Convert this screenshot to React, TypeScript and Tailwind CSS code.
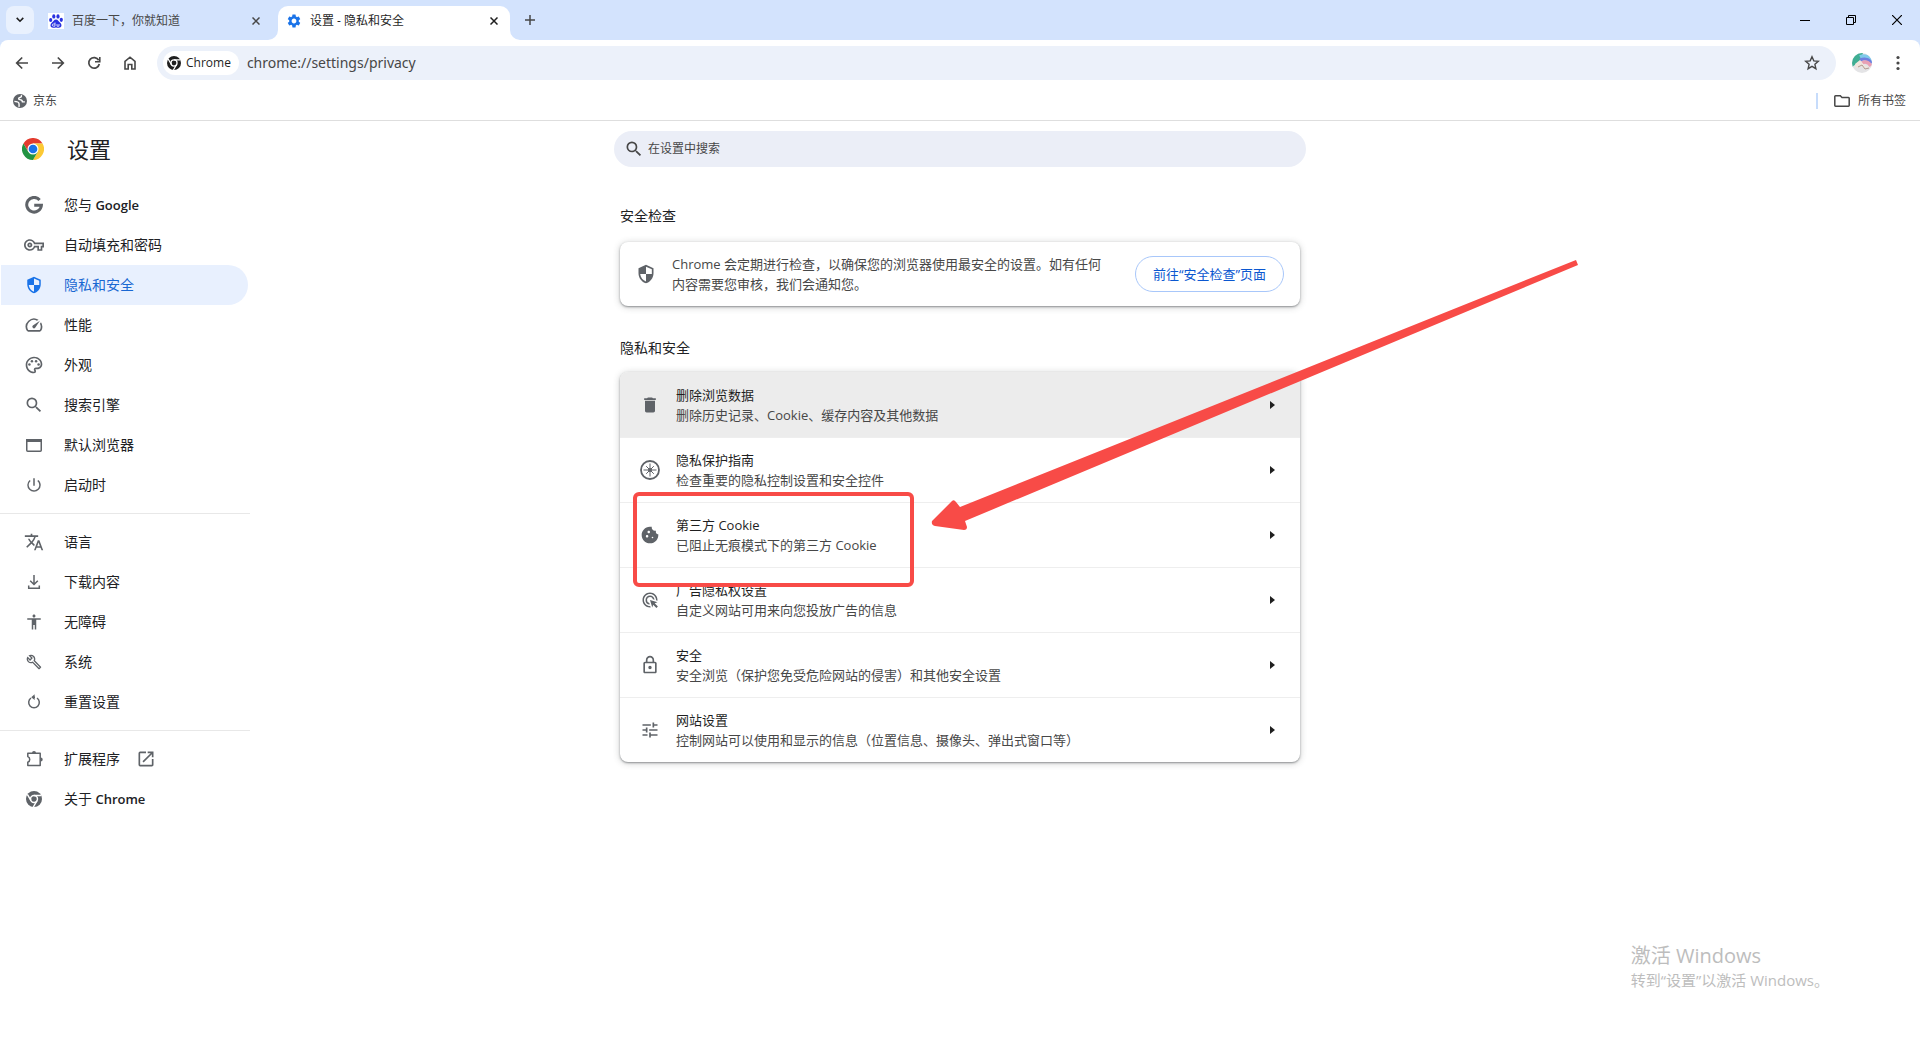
import type { ReactNode } from "react";
import {
  MdAccessibility,
  MdCookie,
  MdDelete,
  MdOpenInNew,
  MdOutlineAdsClick,
  MdOutlineBuild,
  MdOutlineLock,
  MdOutlinePalette,
  MdOutlineSpeed,
  MdOutlineVpnKey,
  MdPowerSettingsNew,
  MdSearch,
  MdSettings,
  MdTranslate,
  MdTune,
} from "react-icons/md";

const line = { fill: "none", stroke: "currentColor", strokeWidth: 2 };

function Shield({ className }: { className?: string }) {
  return (
    <svg viewBox="0 0 24 24" className={className} fill="currentColor">
      <path d="M12 1l9 4v6c0 5.55-3.84 10.74-9 12-5.16-1.26-9-6.45-9-12V5l9-4zm0 11H5c.53 4.12 3.28 7.79 7 8.94V12h7V6.3l-7-3.11V12z" />
    </svg>
  );
}

function ChromeMono({ className }: { className?: string }) {
  return (
    <svg viewBox="0 0 24 24" className={className}>
      <circle cx="12" cy="12" r="12" fill="currentColor" />
      <circle cx="12" cy="12" r="5.2" fill="none" stroke="white" strokeWidth="2.2" />
      <path d="M12 6.8h11M7.5 14.6L2 5.1M16.5 14.6L11 24" stroke="white" strokeWidth="2.2" />
    </svg>
  );
}

function ChromeLogo() {
  return (
    <svg viewBox="0 0 48 48" className="size-[22px]">
      <path d="M24 12h20.8A24 24 0 0 0 3.2 12l10.4 18z" fill="#e33b2e" />
      <path d="M34.4 30L24 48A24 24 0 0 0 44.8 12H24z" fill="#fcc934" />
      <path d="M13.6 30L3.2 12A24 24 0 0 0 24 48l10.4-18z" fill="#229342" />
      <circle cx="24" cy="24" r="12" fill="white" />
      <circle cx="24" cy="24" r="9.5" fill="#1a73e8" />
    </svg>
  );
}

function Google() {
  return (
    <svg viewBox="0 0 24 24" className="size-[18px]">
      <path d="M19.5 5.2A9.8 9.8 0 1 0 21.9 12.3H12.3" {...line} strokeWidth="4" />
    </svg>
  );
}

function Browser() {
  return (
    <svg viewBox="0 0 20 20" className="size-5">
      <rect x="2.75" y="4.75" width="14.5" height="11.5" rx="1" {...line} strokeWidth="1.5" />
      <path d="M2 4h16v3H2z" fill="currentColor" />
    </svg>
  );
}

function Download() {
  return (
    <svg viewBox="0 0 20 20" className="size-5">
      <path d="M10 3v9M6.2 8.7l3.8 3.8 3.8-3.8M4.7 13.5v2.7h10.6v-2.7" {...line} strokeWidth="1.5" />
    </svg>
  );
}

function Reset() {
  return (
    <svg viewBox="0 0 20 20" className="size-5">
      <path d="M7 6a5.300 5.300 0 1 0 6 0M9.500 5.200H11" {...line} strokeWidth="1.5" />
      <path d="M7.2 5.2l3.4-2.900v5.800z" fill="currentColor" />
    </svg>
  );
}

function Puzzle() {
  return (
    <svg viewBox="0 0 20 20" className="size-5">
      <path
        d="M3.800 4.300h12.400v12.200H3.800v-3.300a3 3 0 0 0 0-5.600z"
        strokeLinejoin="round"
        {...line}
        strokeWidth="1.5"
      />
      <path d="M8 4a2 2 0 0 1 4 0zM16.700 8.400a2 2 0 0 1 0 4z" fill="currentColor" />
    </svg>
  );
}

function Compass() {
  return (
    <svg viewBox="0 0 20 20" className="size-5">
      <circle cx="10" cy="10" r="9" {...line} strokeWidth="1.8" />
      <path d="M10 3.5v13M3.5 10h13M6.2 6.2l7.6 7.6M13.8 6.2l-7.6 7.6" {...line} strokeWidth="1" />
      <circle cx="10" cy="10" r="2" fill="currentColor" />
    </svg>
  );
}

function Globe() {
  return (
    <svg viewBox="0 0 20 20" className="size-[14px] text-[#5f6368]">
      <circle cx="10" cy="10" r="10" fill="currentColor" />
      <path
        d="M12 1.5c.5 2.500-1 3.500-3 3.800-1.500.4-1 2.700.5 2.700 2.500 0 4 1 4 3.300H17M2 10.500c3 0 6 .5 6.500 3 .2 1.500.5 2.500 0 5"
        fill="none"
        stroke="white"
        strokeWidth="2"
      />
    </svg>
  );
}

function Baidu() {
  return (
    <svg viewBox="0 0 16 16" className="size-4 bg-white" fill="#2932e1">
      <ellipse cx="2.7" cy="7" rx="1.6" ry="2.1" />
      <ellipse cx="5.8" cy="3.4" rx="1.6" ry="2.2" />
      <ellipse cx="10" cy="3.4" rx="1.6" ry="2.2" />
      <ellipse cx="13.3" cy="6.8" rx="1.6" ry="2.1" />
      <path d="M8 6.5c2 0 2.7 2 4.2 3.2 2.3 2 1.3 5-1.2 5-1.2 0-2-.3-3-.3s-1.8.3-3 .3c-2.5 0-3.5-3-1.2-5C5.3 8.5 6 6.5 8 6.5z" />
      <path d="M7 9.5v3.7H5.4a1 1 0 0 1 0-2.2H7M9 11v2.2h2V11" fill="none" stroke="white" strokeWidth=".8" />
    </svg>
  );
}

function Close() {
  return (
    <svg viewBox="0 0 8 8" className="size-2">
      <path d="M.5.5l7 7M7.5.5l-7 7" {...line} strokeWidth="1.5" />
    </svg>
  );
}

type Item = { label: string; latin?: string; icon: ReactNode; external?: boolean };

const groups: Item[][] = [
  [
    { label: "您与", latin: "Google", icon: <Google /> },
    { label: "自动填充和密码", icon: <MdOutlineVpnKey className="size-5" /> },
    { label: "隐私和安全", icon: <Shield className="size-[18px]" /> },
    { label: "性能", icon: <MdOutlineSpeed className="size-5" /> },
    { label: "外观", icon: <MdOutlinePalette className="size-5" /> },
    { label: "搜索引擎", icon: <MdSearch className="size-5" /> },
    { label: "默认浏览器", icon: <Browser /> },
    { label: "启动时", icon: <MdPowerSettingsNew className="size-[18px]" /> },
  ],
  [
    { label: "语言", icon: <MdTranslate className="size-5" /> },
    { label: "下载内容", icon: <Download /> },
    { label: "无障碍", icon: <MdAccessibility className="size-[18px]" /> },
    { label: "系统", icon: <MdOutlineBuild className="size-4" /> },
    { label: "重置设置", icon: <Reset /> },
  ],
  [
    { label: "扩展程序", icon: <Puzzle />, external: true },
    { label: "关于", latin: "Chrome", icon: <ChromeMono className="size-4" /> },
  ],
];

const rows = [
  { title: "删除浏览数据", text: "删除历史记录、Cookie、缓存内容及其他数据", icon: <MdDelete className="size-5" /> },
  { title: "隐私保护指南", text: "检查重要的隐私控制设置和安全控件", icon: <Compass /> },
  { title: "第三方 Cookie", text: "已阻止无痕模式下的第三方 Cookie", icon: <MdCookie className="size-5" /> },
  { title: "广告隐私权设置", text: "自定义网站可用来向您投放广告的信息", icon: <MdOutlineAdsClick className="size-[18px]" /> },
  { title: "安全", text: "安全浏览（保护您免受危险网站的侵害）和其他安全设置", icon: <MdOutlineLock className="size-5" /> },
  { title: "网站设置", text: "控制网站可以使用和显示的信息（位置信息、摄像头、弹出式窗口等）", icon: <MdTune className="size-5" /> },
];

function TabStrip() {
  return (
    <header className="flex h-10 items-end bg-[#d3e3fd] pl-1.5 text-xs text-[#1f1f1f]">
      <button aria-label="搜索标签页" className="mb-1.5 grid size-7 place-items-center rounded-lg bg-[#e9f1fe]">
        <svg viewBox="0 0 8 6" className="h-1.5 w-2">
          <path d="M.7.9L4 4.2 7.3.9" {...line} strokeWidth="1.6" />
        </svg>
      </button>
      <div className="flex h-[34px] w-[244px] items-center pb-1 pl-[14px] pr-[18px]">
        <Baidu />
        <span className="ml-2 flex-1 leading-4 text-[#474747]">百度一下，你就知道</span>
        <button aria-label="关闭" className="text-[#474747]"><Close /></button>
      </div>
      <div className="relative flex h-[34px] w-[232px] items-center rounded-t-[10px] bg-white pb-1 pl-2 pr-3">
        <svg viewBox="0 0 10 10" className="absolute bottom-0 right-full size-2.5" fill="white">
          <path d="M10 0v10H0A10 10 0 0 0 10 0z" />
        </svg>
        <svg viewBox="0 0 10 10" className="absolute bottom-0 left-full size-2.5" fill="white">
          <path d="M0 0v10h10A10 10 0 0 1 0 0z" />
        </svg>
        <MdSettings className="size-4 text-[#1a73e8]" />
        <span className="ml-2 flex-1 leading-4">设置 - 隐私和安全</span>
        <button aria-label="关闭"><Close /></button>
      </div>
      <button aria-label="新标签页" className="mb-[15px] ml-[15px] text-[#474747]">
        <svg viewBox="0 0 10 10" className="size-2.5">
          <path d="M5 0v10M0 5h10" {...line} strokeWidth="1.5" />
        </svg>
      </button>
      <div className="ml-auto flex h-full items-center gap-9 pr-[18px] text-black">
        <button aria-label="最小化">
          <svg viewBox="0 0 10 10" className="size-2.5"><path d="M0 5.5h10" {...line} strokeWidth="1" /></svg>
        </button>
        <button aria-label="还原">
          <svg viewBox="0 0 10 10" className="size-2.5">
            <path d="M.5 2.5h7v7h-7zM2.5 2.5v-2h7v7h-2" {...line} strokeWidth="1" />
          </svg>
        </button>
        <button aria-label="关闭窗口">
          <svg viewBox="0 0 10 10" className="size-2.5"><path d="M0 0l10 10M10 0L0 10" {...line} strokeWidth="1.2" /></svg>
        </button>
      </div>
    </header>
  );
}

function Toolbar() {
  return (
    <div className="bg-[#d3e3fd]">
      <div className="flex h-[46px] items-center rounded-t-lg bg-white pl-[15px] pr-5 text-[#474747]">
        <div className="flex gap-[22px]">
          <button aria-label="后退">
            <svg viewBox="0 0 14 14" className="size-[14px]"><path d="M13 7H2M7.2 1.5L1.7 7l5.5 5.5" {...line} strokeWidth="1.7" /></svg>
          </button>
          <button aria-label="前进">
            <svg viewBox="0 0 14 14" className="size-[14px]"><path d="M1 7h11M6.8 1.5L12.3 7l-5.5 5.5" {...line} strokeWidth="1.7" /></svg>
          </button>
          <button aria-label="重新加载">
            <svg viewBox="0 0 14 14" className="size-[14px]">
              <path d="M11.7 4.2A5.3 5.3 0 1 0 12.3 8" {...line} strokeWidth="1.7" />
              <path d="M12.8 1v4.8H8" {...line} strokeWidth="1.6" />
            </svg>
          </button>
          <button aria-label="主页">
            <svg viewBox="0 0 14 14" className="size-[14px]">
              <path d="M2 13V5.3L7 1.2l5 4.1V13H8.8V8.5H5.2V13z" {...line} strokeWidth="1.6" />
            </svg>
          </button>
        </div>
        <div className="ml-5 flex h-[34px] flex-1 items-center rounded-full bg-[#ecf1fa] pl-1.5 pr-4">
          <label htmlFor="address" className="flex h-6 items-center gap-[5px] rounded-full bg-white pl-1 pr-2 text-xs text-[#1f1f1f]">
            <ChromeMono className="size-[14px]" />
            Chrome
          </label>
          <input
            id="address"
            defaultValue="chrome://settings/privacy"
            className="ml-2 flex-1 bg-transparent font-['Noto_Sans',sans-serif] text-sm text-[#474747] outline-none"
          />
          <button aria-label="为此标签页添加书签">
            <svg viewBox="0 0 16 16" className="size-4">
              <path d="M8 1.8l1.8 4.1 4.5.4-3.4 3 1 4.4L8 11.3l-3.9 2.4 1-4.4-3.4-3 4.5-.4z" {...line} strokeWidth="1.4" />
            </svg>
          </button>
        </div>
        <button aria-label="个人资料" className="ml-4">
          <svg viewBox="0 0 20 20" className="size-5">
            <clipPath id="face"><circle cx="10" cy="10" r="10" /></clipPath>
            <g clipPath="url(#face)">
              <path d="M0 0h20v20H0z" fill="#e4e4e6" />
              <path d="M0 0h11L8 8l-8 6z" fill="#3fae93" />
              <path d="M8 4q7-3 12 5" stroke="#7fc9ea" strokeWidth="4" fill="none" />
              <path d="M8 7q7-3 12 3" stroke="#6e7fe0" strokeWidth="3" fill="none" />
              <path d="M10 10q5-3 9 3" stroke="#e8a0b4" strokeWidth="3.5" fill="none" />
              <path d="M3 11l5-4 5 6 4 1-4 2-3-3-6 2z" fill="#f1e5dc" />
              <path d="M6 14l4-2 3 4 4-1" stroke="#b09a90" fill="none" />
            </g>
          </svg>
        </button>
        <button aria-label="菜单" className="ml-6">
          <svg viewBox="0 0 4 16" className="h-4 w-1" fill="currentColor">
            <circle cx="2" cy="2.5" r="1.6" /><circle cx="2" cy="8" r="1.6" /><circle cx="2" cy="13.5" r="1.6" />
          </svg>
        </button>
      </div>
      <div className="flex h-[35px] items-center border-b border-[#dedede] bg-white pb-1 pl-[13px] pr-[14px] text-xs text-[#474747]">
        <a href="#jd" className="flex items-center gap-1.5 leading-4"><Globe />京东</a>
        <span className="ml-auto h-4 w-0.5 bg-[#c7dcfb]" />
        <button className="ml-4 flex items-center gap-2">
          <svg viewBox="0 0 16 12" className="h-3 w-4">
            <path d="M.8 2v8.5q0 .7.7.7h13q.7 0 .7-.7V3.200q0-.7-.7-.7H8L6.300.8H1.500q-.7 0-.7.700z" {...line} strokeWidth="1.5" />
          </svg>
          所有书签
        </button>
      </div>
    </div>
  );
}

function Sidebar() {
  return (
    <aside className="text-[#5f6368]">
      <div className="flex h-16 items-center gap-[23px] pb-2 pl-[22px]">
        <ChromeLogo />
        <h1 className="text-[22px] leading-8 text-[#202124]">设置</h1>
      </div>
      <nav>
        {groups.map((group, i) => (
          <ul key={i} className={i > 0 ? "mt-2 border-t border-[#e8e8e8] pt-2" : ""}>
            {group.map((item) => {
              const active = item.label === "隐私和安全";
              return (
                <li key={item.label} className="pl-px pr-0.5">
                  <a
                    href="#settings"
                    className={`flex h-10 items-center rounded-r-full pl-[23px] text-sm ${active ? "bg-[#e8f0fe] text-[#1a73e8]" : ""}`}
                  >
                    <span className="mr-5 grid size-5 place-items-center">{item.icon}</span>
                    <span className={active ? "text-[#1967d2]" : "text-[#202124]"}>
                      {item.label}
                      {item.latin && <span className="text-[13px] font-semibold"> {item.latin}</span>}
                    </span>
                    {item.external && <MdOpenInNew className="ml-4 size-5" />}
                  </a>
                </li>
              );
            })}
          </ul>
        ))}
      </nav>
    </aside>
  );
}

const card = "rounded-lg bg-white shadow-[0_1px_2px_rgba(60,64,67,0.5),0_1px_6px_1px_rgba(60,64,67,0.2)]";

export default function App() {
  return (
    <div className="relative min-h-screen bg-white font-['Open_Sans','Noto_Sans_CJK_SC',sans-serif]">
      <TabStrip />
      <Toolbar />
      <div className="grid grid-cols-[250px_1fr_250px]">
        <Sidebar />
        <main className="mx-auto w-full max-w-[692px] pt-[10px]">
          <label className="flex h-9 items-center gap-1 rounded-full bg-[#ebeef7] pl-2.5 text-[#474747]">
            <MdSearch className="size-5" />
            <input placeholder="在设置中搜索" className="flex-1 bg-transparent text-xs outline-none placeholder:text-[#474747]" />
          </label>
          <div className="px-1.5 text-[13px] leading-5 text-[#474747]">
            <h2 className="mt-[39px] text-sm text-[#202124]">安全检查</h2>
            <section className={`mt-4 flex h-16 items-center px-4 ${card}`}>
              <Shield className="size-5 shrink-0 text-[#5f6368]" />
              <p className="ml-4 w-[430px]">
                Chrome 会定期进行检查，以确保您的浏览器使用最安全的设置。如有任何内容需要您审核，我们会通知您。
              </p>
              <button className="ml-auto h-9 rounded-full border border-[#a8c7fa] px-[17px] text-[#0b57d0]">
                前往“安全检查”页面
              </button>
            </section>
            <h2 className="mt-8 text-sm text-[#202124]">隐私和安全</h2>
            <div className="relative mt-3.5">
              <ul className={`overflow-hidden ${card}`}>
                {rows.map((row, i) => (
                  <li key={row.title} className={i > 0 ? "border-t border-[#eeeeee]" : "bg-[#ececec] pt-px"}>
                    <a href="#row" className="flex h-16 items-center pl-5 pr-[25px]">
                      <span className="grid size-5 place-items-center text-[#5f6368]">{row.icon}</span>
                      <span className="ml-4 flex-1">
                        <span className="block text-[#1f1f1f]">{row.title}</span>
                        <span className="block">{row.text}</span>
                      </span>
                      <svg viewBox="0 0 5 8" className="h-2 w-[5px]" fill="#1f1f1f">
                        <path d="M0 0l5 4-5 4z" />
                      </svg>
                    </a>
                  </li>
                ))}
              </ul>
              <div className="absolute left-[13px] top-[120px] h-[95px] w-[281px] rounded-md border-4 border-[#f84b47]" />
              <svg viewBox="0 0 648 272" className="pointer-events-none absolute -top-[113px] left-[311px] h-[272px] w-[648px]">
                <path
                  d="M645 1l2 5L34 262l2 6q0 3-3 3L4 267q-4-1-3-5L21 242q2-2 4 1l4 5z"
                  fill="#f84b47"
                />
              </svg>
            </div>
          </div>
        </main>
      </div>
      <div className="absolute bottom-[50px] right-[91px] text-[#bdbdbd]">
        <p className="text-xl leading-7">激活 Windows</p>
        <p className="text-[15px] leading-5">转到“设置”以激活 Windows。</p>
      </div>
    </div>
  );
}
